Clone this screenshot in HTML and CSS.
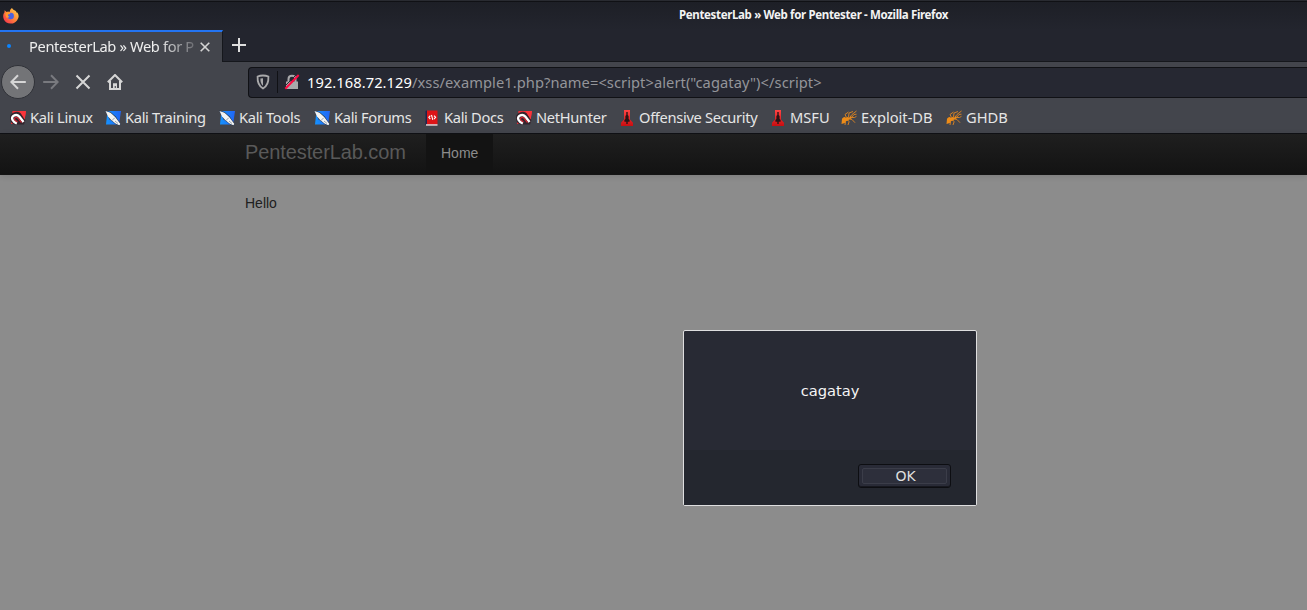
FILE: index.html
```html
<!DOCTYPE html>
<html lang="en">
<head>
<meta charset="utf-8">
<title>PentesterLab » Web for Pentester</title>
<link rel="stylesheet" href="styles.css">
</head>
<body>
<svg class="defs" aria-hidden="true">
  <defs>
    <linearGradient id="blue" x1="0" x2="1"><stop offset="0" stop-color="#1593ff"/><stop offset="1" stop-color="#2265f4"/></linearGradient>
    <linearGradient id="red" x1="0" x2="0" y1="0" y2="1"><stop offset="0" stop-color="#ff4444"/><stop offset="1" stop-color="#c90d10"/></linearGradient>
    <linearGradient id="fox" x1="1" x2="0" y1="0" y2="1"><stop offset="0" stop-color="#ffe050"/><stop offset=".5" stop-color="#ff843a"/><stop offset="1" stop-color="#f5244f"/></linearGradient>
  </defs>
  <symbol id="magnet" viewBox="0 0 16 16">
    <path d="M2.5 1H16l-2.2 13H1z" fill="#f02d35"/>
    <path d="M0 7q0-3 4-4.5Q8 .5 11 3.5l4.5 6.5-1.5 4.5H4Q-.5 12 0 7z" fill="#33252d"/>
    <path d="M9.5 1H16l-1.3 8.5z" fill="#f9353c"/>
    <path d="M13.5 12L9.3 6.6Q7 4 4.3 5.4 1 7 2.6 10q1 2 4.2 3.5" fill="none" stroke="#fff" stroke-width="2.4"/>
    <path d="M11.5 12.5L8.2 8.4Q6.5 6.5 5 7.8q-1.3 1.2.5 2.7l2 1.5" fill="none" stroke="#ce2633" stroke-width="1.2"/>
  </symbol>
  <symbol id="knife" viewBox="0 0 16 16">
    <path d="M2.5 1H16l-2 13.5H1z" fill="url(#blue)"/>
    <path d="M0 .5l5.5 1.6 5.2 4.5 5.2 7.6-1.7 1.5-3.7-1.8-6-4.7z" fill="#253349"/>
    <path d="M.5 1l5 1.8 4.7 4.3 5.2 7-1.1 1.2-3.8-1.9L6.2 10 3 6.5z" fill="#f3f4f4"/>
    <path d="M7 10.5l2.7-2.7M10 11l3 2.5" stroke="#737d88" stroke-width=".7"/>
  </symbol>
  <symbol id="book" viewBox="0 0 16 16">
    <path d="M1.5 1L3 .5V15H1.5z" fill="#20244d"/>
    <path d="M3 .5h10.5v14H3z" fill="#dd1417"/>
    <path d="M2 14.2h11.5v1.5H2z" fill="#e6d2d5"/>
    <path d="M6.3 5.7L4.8 7.3l1.5 1.8M10 5.7l1.6 1.6L10 9.1M7.5 5l1.3 4.8" fill="none" stroke="#fff" stroke-width="1.1"/>
  </symbol>
  <symbol id="tower" viewBox="0 0 16 16">
    <path d="M5 0h6v9.5l3 3.3V16H2v-3.2l3-3.3z" fill="url(#red)"/>
    <path d="M7.3 2h1.4v3l.9 1v3l1 1v1.8H8.7V14H7.3v-2.2H5.4V10l1-1V6l.9-1z" fill="#281416"/>
  </symbol>
  <symbol id="ant" viewBox="0 0 16 16">
    <path d="M1 8.7q2-2.6 4-1l1.3-.8 2 .5 1.3-1.2 1.5.8-.9 1.8-2.1.5-.9 1.5-2 .1-.7 1.8L.5 14z" fill="#ed8c18"/>
    <path d="M5.5 7.5L4 4.5 7.5 2M7.5 7.3L8 3l4-1.5M9 7l2-2.5L15.5 1M10 7.5h3.5l2-1.2M8 9l3 .5 3 3.2M6.5 10l1.7 1.5L7 15M4.5 11L4 15M11 7l2-2.5 2.5-.3" fill="none" stroke="#d98323" stroke-width=".95"/>
  </symbol>
</svg>
<header class="browser">
  <div class="titlebar">
    <svg class="firefox" viewBox="0 0 16 16">
      <path d="M8.9 0q1.3 2 3.5 2.8.8.4 1.3 2l.7-.4q2.7 4.2-.4 8-2.5 3.4-6.5 3.1-4.8-.2-6.6-4Q-.8 7 1.5 4.2l.1-2 2 1.7q1.6-.6 3 .1.2-2.5 2.3-4z" fill="url(#fox)"/>
      <circle cx="7.7" cy="8" r="3.2" fill="#4a62e0"/>
      <path d="M2.5 4.8q2.8-1.8 5 .9-1.3.7-2.5.8-.4 1.7 1.3 2.2-1.2 1.6-3 .8-1.2-2-.8-4.7z" fill="#ff982d"/>
    </svg>
    <span class="window-title">PentesterLab » Web for Pentester - Mozilla Firefox</span>
  </div>
  <div class="tabs">
    <div class="tab">
      <span class="loading"></span>
      <span class="tab-title">PentesterLab » Web for P</span>
      <svg class="close" viewBox="0 0 10 10"><path d="M.7.7l8.6 8.6M9.3.7L.7 9.3"/></svg>
    </div>
    <svg class="new-tab" viewBox="0 0 14 14"><path d="M7 0v14M0 7h14"/></svg>
  </div>
  <div class="toolbar">
    <div class="back"><svg viewBox="0 0 16 16"><path d="M15.8 8H1.5M8 1.3L1.3 8 8 14.7"/></svg></div>
    <svg class="forward" viewBox="0 0 16 16"><path d="M.2 8h14.3M8 1.3L14.7 8 8 14.7"/></svg>
    <svg class="stop" viewBox="0 0 16 16"><path d="M1.5 1.5l13 13M14.5 1.5l-13 13"/></svg>
    <svg class="home" viewBox="0 0 16 16"><path d="M.8 8.2L8 1l7.2 7.2M3 7v8h10V7"/><path class="solid" d="M6 14.5V9.2h4v5.3H8.8V12H7.7v2.5z"/></svg>
    <div class="urlbar">
      <svg class="shield" viewBox="0 0 14 16"><path d="M7 1.5q3 0 5.4 1 .5 8.6-5.4 12Q1.1 11 1.6 2.5q2.4-1 5.4-1z"/><path class="solid" d="M7 4.2V11.8Q4.2 9.5 4.4 4.6 5.6 4.2 7 4.2z"/></svg>
      <span class="divider"></span>
      <svg class="lock" viewBox="0 0 16 16"><path class="body" d="M2 7.5h12V15H2z"/><path class="shackle" d="M4.5 8V5q0-3.3 3.5-3.3T11.5 5v3"/><path class="gap" d="M13 0L.5 12.5"/><path class="slash" d="M14.7 1L1.3 14.7"/></svg>
      <span class="url"><b>192.168.72.129</b>/xss/example1.php?name=&lt;script&gt;alert("cagatay")&lt;/script&gt;</span>
    </div>
  </div>
  <nav class="bookmarks">
    <a class="w63"><svg><use href="#magnet"/></svg><span>Kali Linux</span></a>
    <a class="w82"><svg><use href="#knife"/></svg><span>Kali Training</span></a>
    <a class="w63"><svg><use href="#knife"/></svg><span>Kali Tools</span></a>
    <a class="w78"><svg><use href="#knife"/></svg><span>Kali Forums</span></a>
    <a class="w61"><svg><use href="#book"/></svg><span>Kali Docs</span></a>
    <a class="w70"><svg><use href="#magnet"/></svg><span>NetHunter</span></a>
    <a class="w119"><svg><use href="#tower"/></svg><span>Offensive Security</span></a>
    <a class="w40"><svg><use href="#tower"/></svg><span>MSFU</span></a>
    <a class="w73"><svg><use href="#ant"/></svg><span>Exploit-DB</span></a>
    <a class="w42"><svg><use href="#ant"/></svg><span>GHDB</span></a>
  </nav>
</header>
<main class="page">
  <nav class="navbar"><a class="brand">PentesterLab.com</a><a class="nav-home">Home</a></nav>
  <p class="hello">Hello</p>
</main>
<div class="dialog" role="dialog">
  <div class="message">cagatay</div>
  <div class="actions"><button class="ok"><span>OK</span></button></div>
</div>
</body>
</html>
```
FILE: styles.css
```css
* { box-sizing: border-box; }
body { margin: 0; width: 1307px; height: 610px; overflow: hidden; background: #8c8c8c; font-family: "Noto Sans", sans-serif; }
svg { display: block; flex: none; fill: none; }
.defs { position: absolute; width: 0; height: 0; }
.browser { height: 134px; background: #43454c; color: #e6e6e6; border-bottom: 1px solid #101115; }
.titlebar { display: flex; align-items: center; height: 30px; padding-left: 3px; background: linear-gradient(#1d1f26, #23252e); border-top: 1px solid #292b31; box-shadow: inset 0 1px #101115; }
.firefox { width: 16px; height: 16px; }
.window-title { margin-left: 660px; padding-bottom: 2px; font-size: 11.5px; font-weight: 700; white-space: nowrap; color: #f3f3f3; letter-spacing: -0.35px; }
.tabs { display: flex; height: 32px; background: #23252e; box-shadow: inset 0 -1px #15171c; }
.tab { display: flex; align-items: center; width: 223px; height: 32px; padding-left: 7px; background: #43454c; border-top: 2px solid #2374f2; border-right: 1px solid #15171c; }
.loading { width: 4px; height: 4px; margin-bottom: 2px; border-radius: 50%; background: #0a84ff; }
.tab-title { width: 170px; margin-left: 18px; padding-bottom: 3px; white-space: nowrap; font-size: 14.67px; letter-spacing: -0.36px; color: #eee; mask-image: linear-gradient(to right, #000 76%, transparent 104%); }
.close { width: 10px; height: 10px; margin: 0 0 1px 1px; stroke: #d4d4d4; stroke-width: 1.6; }
.new-tab { width: 14px; height: 14px; margin: 8px 0 0 9px; stroke: #dedede; stroke-width: 2; }
.toolbar { display: flex; align-items: center; height: 40px; padding-left: 1px; stroke: #d6d6d6; stroke-width: 2; }
.back { display: flex; align-items: center; justify-content: center; width: 34px; height: 34px; border-radius: 50%; background: #737477; border: 1px solid #303238; }
.back svg, .forward, .stop, .home { width: 16px; height: 16px; }
.forward { margin-left: 8px; stroke: #797a7f; }
.stop, .home { margin-left: 16px; }
.home .solid { fill: #d6d6d6; stroke: none; }
.urlbar { display: flex; align-items: center; flex: 1; height: 31px; margin-left: 125px; padding-left: 7px; background: #262832; border: 1px solid #101115; border-right: 0; border-radius: 4px 0 0 4px; }
.shield { width: 14px; height: 16px; stroke: #a9a9ab; stroke-width: 1.8; }
.shield .solid { fill: #a9a9ab; stroke: none; }
.divider { width: 1px; height: 22px; margin-left: 7px; background: #101115; }
.lock { width: 16px; height: 16px; margin-left: 6px; }
.lock .body { fill: #a9a9ab; stroke: none; }
.lock .shackle { stroke: #a9a9ab; }
.lock .gap { stroke: #262832; stroke-width: 1; }
.lock .slash { stroke: #ff0b43; }
.url { margin-left: 7px; font-size: 14.67px; letter-spacing: 0.07px; white-space: nowrap; color: #94959a; }
.url b { font-weight: 400; color: #fff; }
.bookmarks { display: flex; height: 31px; align-items: center; gap: 12px; padding-left: 10px; font-size: 14.67px; letter-spacing: -0.32px; white-space: nowrap; }
.bookmarks a { display: flex; align-items: center; gap: 4px; }
.bookmarks svg { width: 16px; height: 16px; }
.bookmarks span { padding-bottom: 2px; }
.w40 { width: 59px; letter-spacing: 0; } .w42 { width: 62px; letter-spacing: 0; } .w61 { width: 80px; }
.w63 { width: 83px; } .w70 { width: 91px; } .w73 { width: 93px; letter-spacing: 0; }
.w78 { width: 98px; } .w82 { width: 102px; } .w119 { width: 139px; }
.page { font-family: "Liberation Sans", sans-serif; }
.navbar { display: flex; height: 41px; padding-left: 245px; background: linear-gradient(#1f1f1f, #131313); border-bottom: 1px solid #151515; box-shadow: 0 1px 6px rgba(0,0,0,.12); }
.brand { width: 181px; font-size: 20px; line-height: 36px; letter-spacing: -0.1px; color: #595959; }
.nav-home { width: 67px; padding-left: 15px; background: #131313; font-size: 14px; line-height: 38px; color: #8c8c8c; }
.hello { margin: 18px 0 0 245px; font-size: 14px; line-height: 20px; color: #202020; }
.dialog { position: absolute; left: 683px; top: 330px; width: 294px; height: 176px; border: 1px solid #dededf; border-radius: 2px; background: #282a34; color: #f5f5f5; font: 14.67px "DejaVu Sans", sans-serif; }
.message { height: 119px; padding-top: 1px; line-height: 118px; text-align: center; }
.actions { display: flex; justify-content: flex-end; height: 55px; padding: 14px 25px 0 0; background: #24272f; }
.ok { width: 93px; height: 24px; padding: 3px; border: 1px solid #0d0e12; border-radius: 3px; background: #292b37; color: #dedede; font: 14px "DejaVu Sans", sans-serif; box-shadow: inset 0 -1px #17181f; }
.ok span { display: block; width: 85px; height: 16px; padding-left: 2px; line-height: 14px; border: 1px solid #3b3d49; border-radius: 2px; background: #2d2f3b; }
```
